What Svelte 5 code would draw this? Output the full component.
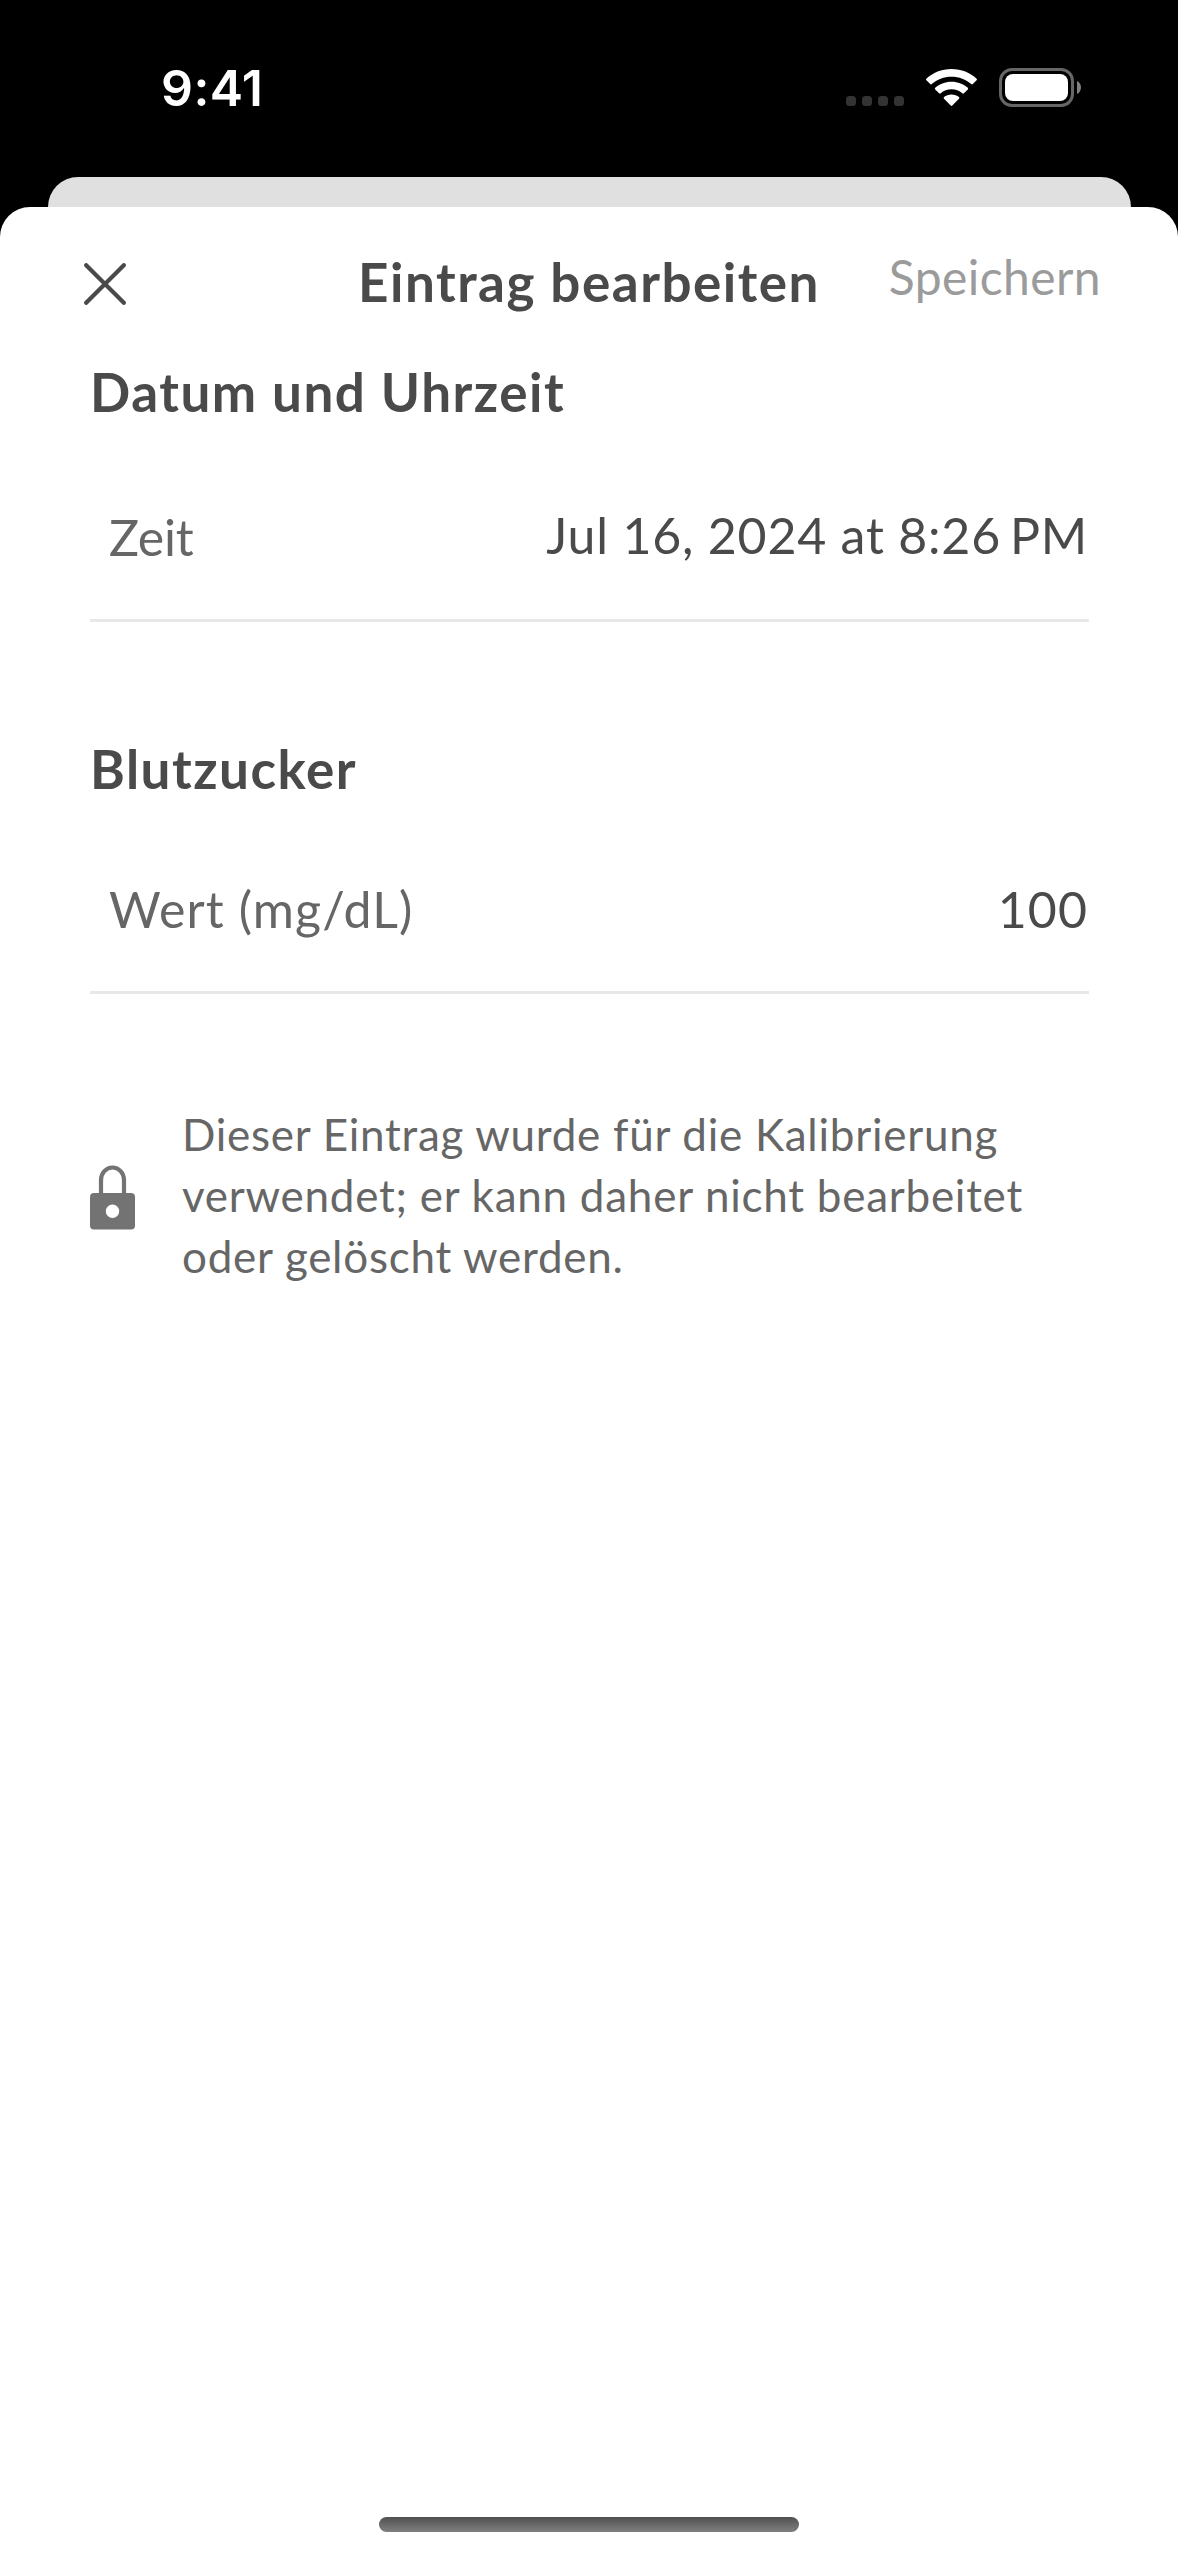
<script lang="ts">
  interface Entry {
    time: string;
    meridiem: string;
    glucose: number;
    unit: string;
    locked: boolean;
  }

  interface Props {
    entry?: Entry;
    onclose?: () => void;
    onsave?: (entry: Entry) => void;
  }

  let {
    entry = { time: 'Jul 16, 2024 at 8:26', meridiem: 'PM', glucose: 100, unit: 'mg/dL', locked: true },
    onclose,
    onsave,
  }: Props = $props();

  const NOTE_LINES = [
    'Dieser Eintrag wurde für die Kalibrierung',
    'verwendet; er kann daher nicht bearbeitet',
    'oder gelöscht werden.',
  ];
</script>

<div class="screen">
  <div class="status-bar">
    <span class="clock">9:41</span>
    <div class="status-icons">
      <div class="signal">
        {#each Array(4) as _}
          <i></i>
        {/each}
      </div>
      <svg class="wifi" width="51" height="38" viewBox="0 0 51 38" fill="#fff">
        <path d="M25.5 0C35.4 0 44.2 3.7 50.6 9.7c.5.5.5 1.1 0 1.6l-3.8 3.8c-.5.5-1.1.5-1.6 0C40 10.3 33.1 7.7 25.5 7.7S11 10.3 5.8 15.1c-.5.5-1.1.5-1.6 0L.4 11.3c-.5-.5-.5-1.1 0-1.6C6.8 3.7 15.6 0 25.5 0z" />
        <path d="M25.5 12.7c6.4 0 12.1 2.3 16.3 6.1.5.5.5 1.1 0 1.6l-3.9 3.9c-.5.5-1.1.5-1.6 0-2.9-2.5-6.6-4-10.8-4s-7.9 1.5-10.8 4c-.5.5-1.1.5-1.6 0l-3.9-3.9c-.5-.5-.5-1.1 0-1.6 4.2-3.8 9.9-6.1 16.300-6.1z" />
        <path d="M25.5 25.4c2.9 0 5.5 1 7.5 2.7.5.5.5 1.1 0 1.6l-6.7 6.8c-.5.5-1.1.5-1.6 0L18 29.700c-.5-.5-.5-1.1 0-1.6 2-1.7 4.6-2.7 7.5-2.7z" />
      </svg>
      <svg width="82" height="39" viewBox="0 0 82 39">
        <rect x="1.5" y="1.5" width="72" height="36" rx="11.5" fill="none" stroke="#666" stroke-width="3" />
        <rect x="6" y="6" width="63" height="27" rx="8" fill="#fff" />
        <path d="M78 13v13c2.400-1.1 4-3.6 4-6.5s-1.600-5.4-4-6.5z" fill="#808080" />
      </svg>
    </div>
  </div>

  <div class="sheet-behind"></div>

  <div class="sheet">
    <header>
      <button class="close" type="button" aria-label="Schließen" onclick={() => onclose?.()}>
        <svg width="42" height="42" viewBox="0 0 42 42">
          <path d="M2.2 2.2l37.6 37.6M39.8 2.2L2.2 39.8" stroke="#4a4a4a" stroke-width="4.2" stroke-linecap="round" />
        </svg>
      </button>
      <h1>Eintrag bearbeiten</h1>
      <button class="save" type="button" disabled={entry.locked} onclick={() => onsave?.(entry)}>Speichern</button>
    </header>

    <main>
      <section class="date">
        <h2>Datum und Uhrzeit</h2>
        <div class="row">
          <span class="label">Zeit</span>
          <span class="value">{entry.time}<span class="meridiem">{entry.meridiem}</span></span>
        </div>
      </section>

      <section class="glucose">
        <h2>Blutzucker</h2>
        <div class="row">
          <span class="label">Wert ({entry.unit})</span>
          <span class="value">{entry.glucose}</span>
        </div>
      </section>

      {#if entry.locked}
        <div class="note">
          <svg width="45" height="65" viewBox="0 0 45 65">
            <path d="M11 30V15a11.5 12.5 0 0 1 23 0v15" fill="none" stroke="#737373" stroke-width="4.2" />
            <path
              fill="#737373"
              fill-rule="evenodd"
              d="M4 28h37a4 4 0 0 1 4 4v28.5a4 4 0 0 1-4 4H4a4 4 0 0 1-4-4V32a4 4 0 0 1 4-4zM22.5 39.5a6.7 6.7 0 1 0 0 13.4a6.7 6.7 0 1 0 0-13.4z"
            />
          </svg>
          <p>
            {#each NOTE_LINES as line}
              <span>{line}</span>
            {/each}
          </p>
        </div>
      {/if}
    </main>

    <div class="home-indicator"></div>
  </div>
</div>

<style>
  :global(body) {
    background: #000;
  }

  .screen {
    display: flex;
    flex-direction: column;
    width: 1178px;
    height: 2556px;
    background: #000;
    color: #4a4a4a;
    font-family: Lato, 'Open Sans', sans-serif;
    overflow: hidden;
  }

  .status-bar {
    display: flex;
    align-items: center;
    justify-content: space-between;
    box-sizing: border-box;
    height: 177px;
    padding: 0 97px 2px 161px;
  }

  .clock {
    color: #fff;
    font-family: Inter, sans-serif;
    font-size: 50px;
    font-weight: 600;
    letter-spacing: 0.4px;
  }

  .status-icons {
    display: flex;
    align-items: center;
  }

  .signal {
    display: flex;
    gap: 6px;
    margin: 27px 22px 0 0;
  }

  .signal i {
    width: 10px;
    height: 10px;
    border-radius: 3.5px;
    background: #333;
  }

  .wifi {
    margin-right: 22px;
  }

  .sheet-behind {
    flex: none;
    height: 30px;
    margin: 0 47px 0 48px;
    border-radius: 30px 30px 0 0;
    background: #e0e0e0;
  }

  .sheet {
    flex: 1;
    display: flex;
    flex-direction: column;
    border-radius: 30px 30px 0 0;
    background: #fff;
  }

  header {
    display: grid;
    grid-template-columns: 1fr auto 1fr;
    align-items: center;
    height: 153px;
    padding: 0 77px 0 84px;
  }

  h1,
  h2 {
    margin: 0;
    font-size: 53px;
    font-weight: 700;
    line-height: 61px;
    letter-spacing: 1.5px;
  }

  h1 {
    padding-bottom: 4px;
    margin-left: -7px;
  }

  h2 {
    padding-top: 1px;
  }

  button {
    padding: 0;
    border: none;
    background: none;
    font-family: inherit;
  }

  .close {
    display: flex;
    justify-self: start;
  }

  .save {
    justify-self: end;
    padding-bottom: 14px;
    color: #9b9b9b;
    font-size: 48px;
    letter-spacing: 0.4px;
  }

  main {
    padding: 0 89px 0 90px;
  }

  .date h2 {
    margin-bottom: 33px;
  }

  .glucose {
    margin-top: 115px;
  }

  .glucose h2 {
    margin-bottom: 28px;
  }

  .row {
    display: flex;
    align-items: center;
    justify-content: space-between;
    height: 164px;
    padding: 0 1px 0 19px;
    border-bottom: 3px solid #e8e8e8;
    font-size: 50px;
    letter-spacing: 1.1px;
  }

  .label {
    color: #666;
  }

  .date .label {
    letter-spacing: -0.2px;
  }

  .date .value {
    padding-bottom: 4px;
    letter-spacing: 0.8px;
  }

  .meridiem {
    margin-left: 9px;
  }

  .note {
    display: flex;
    align-items: center;
    gap: 47px;
    margin-top: 110px;
    color: #666;
  }

  .note svg {
    flex: none;
    margin-top: 3px;
  }

  .note p {
    margin: 0;
    font-size: 44px;
    line-height: 61px;
    letter-spacing: 0.74px;
  }

  .note span {
    display: block;
    white-space: nowrap;
  }

  .home-indicator {
    width: 420px;
    height: 15px;
    margin: auto auto 24px;
    border-radius: 8px;
    background: linear-gradient(#505050, #808080);
  }
</style>
